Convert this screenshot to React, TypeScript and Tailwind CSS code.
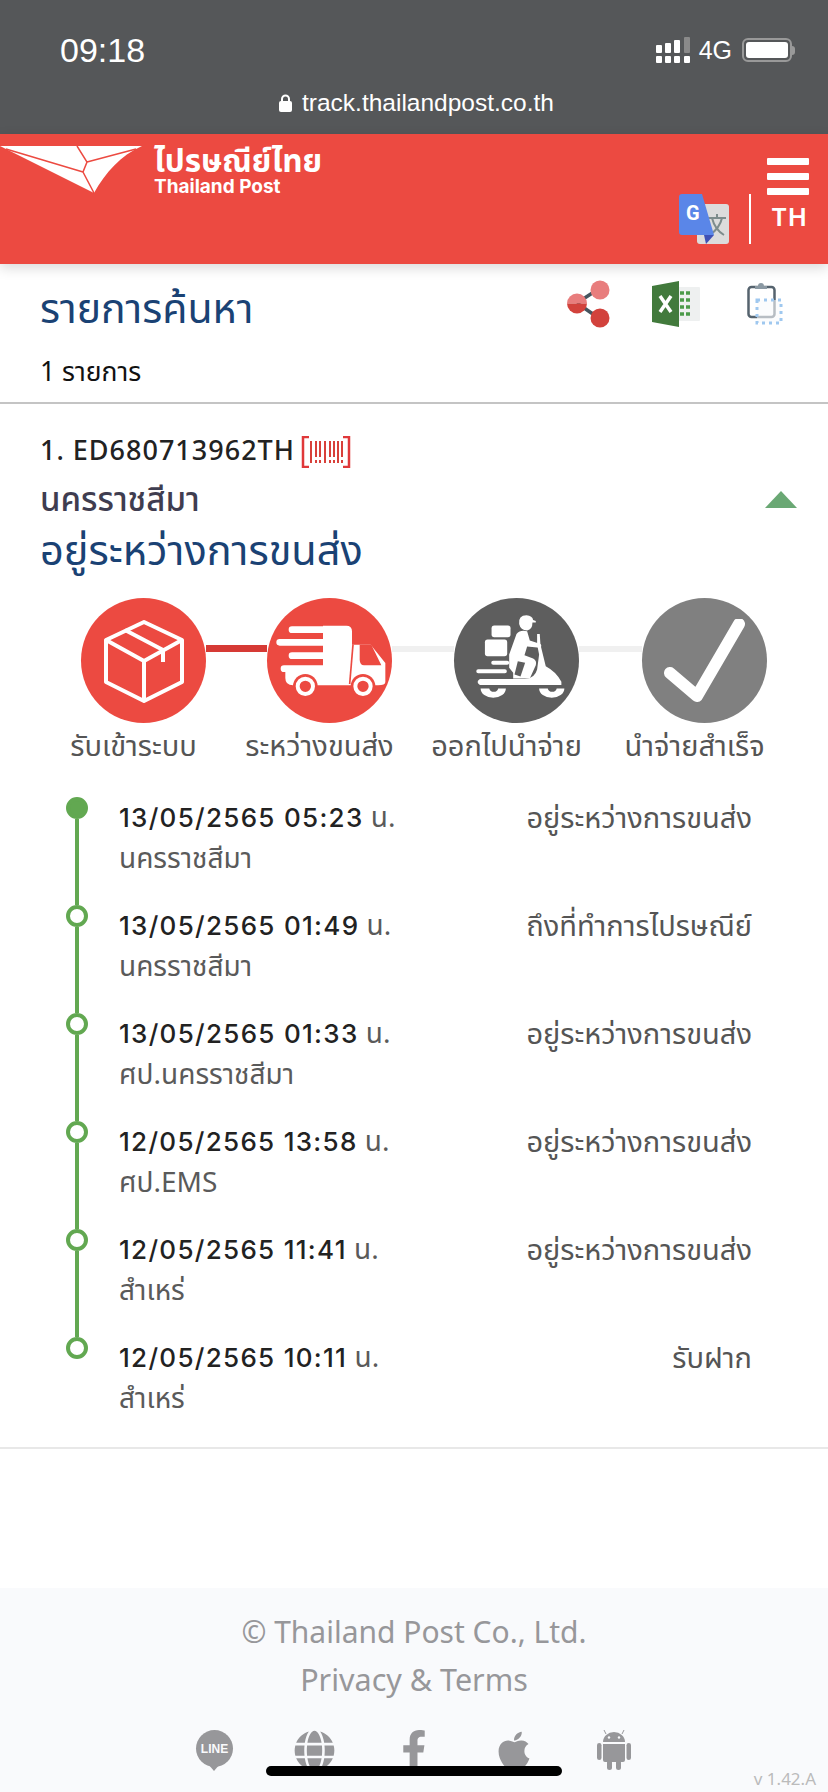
import React from 'react';
import { FaGlobe, FaFacebookF, FaApple } from 'react-icons/fa';

const TRACKS = [
  { date: '13/05/2565 05:23', place: 'นครราชสีมา', status: 'อยู่ระหว่างการขนส่ง' },
  { date: '13/05/2565 01:49', place: 'นครราชสีมา', status: 'ถึงที่ทำการไปรษณีย์' },
  { date: '13/05/2565 01:33', place: 'ศป.นครราชสีมา', status: 'อยู่ระหว่างการขนส่ง' },
  { date: '12/05/2565 13:58', place: 'ศป.EMS', status: 'อยู่ระหว่างการขนส่ง' },
  { date: '12/05/2565 11:41', place: 'สำเหร่', status: 'อยู่ระหว่างการขนส่ง' },
  { date: '12/05/2565 10:11', place: 'สำเหร่', status: 'รับฝาก' },
];

function Logo() {
  return (
    <svg width="142" height="48" viewBox="0 0 142 48">
      <path d="M0 0H142C120 10 106 26 94 47Z" fill="#fff" />
      <path d="M6 3L83 26M77 0L87 16L83 26L94 47M87 16L136 3" stroke="#ec4a41" strokeWidth="1.5" fill="none" />
    </svg>
  );
}

function TranslateIcon() {
  return (
    <svg width="50" height="50" viewBox="0 0 50 50">
      <rect x="18" y="10" width="32" height="40" rx="3" fill="#dcdcdc" />
      <path d="M29 24H47M38 20V24M43 24C41 33 35 38 31 41M33 24C35 32 40 38 45 41" stroke="#7d8c8c" strokeWidth="2" fill="none" />
      <path d="M25 41L35 41L27 50Z" fill="#3f51b5" />
      <path d="M3 0H23L35 41H3C1 41 0 40 0 38V3C0 1 1 0 3 0Z" fill="#5a86e8" />
      <text x="7" y="26" fill="#fff" fontSize="20" fontWeight="700" fontFamily="Roboto, sans-serif">G</text>
    </svg>
  );
}

function ShareIcon() {
  return (
    <svg width="43" height="48" viewBox="0 0 43 48">
      <path d="M10 23L33 8M10 23L33 39" stroke="#46555f" strokeWidth="3.5" />
      <circle cx="33" cy="10" r="9.5" fill="#e87d7d" />
      <circle cx="33" cy="38" r="9.5" fill="#d2423c" />
      <path d="M0 23.500a10 10 0 0 1 20 0Z" fill="#e87d7d" />
      <path d="M0 23.500a10 10 0 0 0 20 0Z" fill="#d2423c" />
    </svg>
  );
}

function ExcelIcon() {
  return (
    <svg width="48" height="46" viewBox="0 0 48 46">
      <rect x="24" y="6" width="24" height="34" rx="1" fill="#eef0f0" />
      <path d="M28 12h10M28 19h10M28 26h10M28 33h10" stroke="#4c9a4a" strokeWidth="3.500" strokeDasharray="4 2" />
      <path d="M0 5L27 0V46L0 41Z" fill="#427a3c" />
      <path d="M8 15L19 31M19 15L8 31" stroke="#fff" strokeWidth="3.500" />
    </svg>
  );
}

function ClipboardIcon() {
  return (
    <svg width="36" height="44" viewBox="0 0 36 44">
      <rect x="1.500" y="5" width="26" height="30" rx="3" fill="none" stroke="#55636e" strokeWidth="2.500" />
      <path d="M8 7V4H11A3 3 0 0 1 17 4H20V7Z" fill="#8b99a3" />
      <rect x="10" y="18" width="24" height="23" fill="#f8fafc" fillOpacity="0.6" stroke="#9fc8ef" strokeWidth="3" strokeDasharray="3 4" />
    </svg>
  );
}

function BarcodeIcon() {
  return (
    <svg width="50" height="32" viewBox="0 0 50 32" className="mt-[3px]">
      <path d="M8 1H2V31H8M42 1H48V31H42" stroke="#e0383a" strokeWidth="2.500" fill="none" />
      <path d="M10 5V27M15 5V21M19 5V21M24 5V27M29 5V21M33 5V21M37 5V27M41 5V21" stroke="#d8403a" strokeWidth="2" />
      <path d="M15 24V27M19 24V27M29 24V27M33 24V27M41 24V27" stroke="#d8403a" strokeWidth="2" />
    </svg>
  );
}

function BoxIcon() {
  return (
    <svg width="82" height="88" viewBox="0 0 82 84" fill="none" stroke="#fff" strokeWidth="4" strokeLinejoin="round">
      <path d="M41 3L79 21V63L41 82L3 63V21Z" />
      <path d="M3 21L41 42L79 21M41 42V82M22 11L60 31V43" />
    </svg>
  );
}

function TruckIcon() {
  return (
    <svg width="125" height="125" viewBox="17 10 375 375">
      <path d="M185 93H255Q272 93 272 110V150H328L372 205V262Q372 272 350 272H95Q72 272 72 250V222H185Z" fill="#fff" />
      <path d="M92 105H190M55 143H190M92 183H190M68 222H190" stroke="#fff" strokeWidth="20" strokeLinecap="round" />
      <path d="M295 150H330L360 212H308Q296 212 295 195Z" fill="#ec4a41" />
      <path d="M275 150L265 268" stroke="#ec4a41" strokeWidth="5" />
      <circle cx="132" cy="275" r="37" fill="#ec4a41" />
      <circle cx="132" cy="275" r="23" fill="#ec4a41" stroke="#fff" strokeWidth="12" />
      <circle cx="305" cy="275" r="37" fill="#ec4a41" />
      <circle cx="305" cy="275" r="23" fill="#ec4a41" stroke="#fff" strokeWidth="12" />
    </svg>
  );
}

function ScooterIcon() {
  return (
    <svg width="125" height="125" viewBox="12 10 376 376" fill="#fff">
      <rect x="125" y="93" width="57" height="35" rx="8" />
      <rect x="105" y="135" width="67" height="50" rx="8" />
      <path d="M208 88Q205 62 230 62Q248 64 250 76L258 79V84L248 84Q248 105 232 108Q212 106 208 88Z" />
      <path d="M200 118Q212 104 232 110L240 138L272 148Q278 155 270 160L232 156L224 182L250 192Q262 198 258 212L240 252H190L190 235L178 220L178 180Z" />
      <path d="M204 200L226 205L212 246L194 240Z" fill="#5e5e5e" />
      <path d="M262 118L270 118L272 150L288 215Q320 232 335 262L335 272H90Q76 263 90 254H225Q255 252 262 225L268 180L262 150Z" />
      <path d="M130 205H172M85 230H165" stroke="#fff" strokeWidth="12" strokeLinecap="round" />
      <path d="M92 282H118A14 14 0 0 0 145 282H168A38 28 0 0 1 92 282Z" />
      <path d="M268 282H294A14 14 0 0 0 321 282H344A38 28 0 0 1 268 282Z" />
    </svg>
  );
}

function CheckIcon() {
  return (
    <svg width="82" height="84" viewBox="0 0 82 84" fill="none" stroke="#fff" strokeWidth="12" strokeLinecap="round" strokeLinejoin="round">
      <path d="M6 54L33 77L75 5" />
    </svg>
  );
}

function LineIcon() {
  return (
    <svg width="41" height="41" viewBox="0 0 41 41" fill="#97979a">
      <circle cx="20.500" cy="18.500" r="18.500" />
      <path d="M14 34H26L20 41Z" />
      <text x="20.500" y="23" textAnchor="middle" fill="#f9fafc" fontSize="12" fontWeight="700" fontFamily="'Liberation Sans', sans-serif">LINE</text>
    </svg>
  );
}

function AndroidIcon() {
  return (
    <svg width="34" height="40" viewBox="0 0 34 40" fill="#97979a">
      <path d="M6 12A11 10 0 0 1 28 12Z" />
      <path d="M9 4L7 0M25 4L27 0" stroke="#97979a" strokeWidth="1" />
      <circle cx="12" cy="7.500" r="1.200" fill="#f9fafc" />
      <circle cx="22" cy="7.500" r="1.200" fill="#f9fafc" />
      <path d="M6 14H28V30Q28 32 26 32H8Q6 32 6 30Z" />
      <rect x="0" y="13" width="4.500" height="17" rx="2.250" />
      <rect x="29.500" y="13" width="4.500" height="17" rx="2.250" />
      <rect x="10" y="30" width="5" height="10" rx="2.500" />
      <rect x="19" y="30" width="5" height="10" rx="2.500" />
    </svg>
  );
}

function Step({ label, color, children }: { label: string; color: string; children: React.ReactNode }) {
  return (
    <div className="flex flex-col items-center w-[125px] shrink-0 relative z-10">
      <div className={`w-[125px] h-[125px] rounded-full flex items-center justify-center ${color}`}>{children}</div>
      <div className="mt-[6px] -translate-x-[10px] text-[29px] leading-[32px] text-[#555] whitespace-nowrap">{label}</div>
    </div>
  );
}

export default function App() {
  return (
    <div className="relative w-[828px] h-[1792px] overflow-hidden bg-white font-['Noto_Sans','Noto_Sans_Thai',sans-serif]">
      {/* Status bar */}
      <div className="h-[134px] bg-[#555759] text-white flex flex-col">
        <div className="flex items-center justify-between pl-[60px] pr-[33px] pt-[32px]">
          <span className="text-[34px] leading-[36px] font-['Liberation_Sans',sans-serif]">09:18</span>
          <div className="flex items-center gap-[6px]">
            <svg width="34" height="26" viewBox="0 0 34 26" fill="#fff">
              <rect x="0" y="8" width="6" height="8" rx="1" />
              <rect x="9" y="6" width="6" height="10" rx="1" />
              <rect x="18" y="3" width="6" height="13" rx="1" />
              <rect x="28" y="0" width="6" height="16" rx="1" fill="#8a8a8a" />
              <rect x="0" y="19" width="6" height="7" rx="1" />
              <rect x="9" y="19" width="6" height="7" rx="1" />
              <rect x="18" y="19" width="6" height="7" rx="1" />
              <rect x="28" y="19" width="6" height="7" rx="1" />
            </svg>
            <span className="text-[25px] leading-[28px] ml-[3px] font-['Liberation_Sans',sans-serif]">4G</span>
            <div className="flex items-center ml-[4px]">
              <div className="w-[50px] h-[24px] rounded-[6px] border-2 border-[#999] p-[2px]">
                <div className="w-full h-full rounded-[3px] bg-white" />
              </div>
              <div className="w-[3px] h-[9px] rounded-r-sm bg-[#999]" />
            </div>
          </div>
        </div>
        <div className="flex items-center justify-center gap-[10px] mt-[21px] pl-[5px] text-[24.500px] leading-[28px] font-['Liberation_Sans',sans-serif]">
          <svg width="13" height="18" viewBox="0 0 13 18" fill="#fff">
            <path d="M2 8V5a4.500 4.500 0 0 1 9 0v3h-2V5a2.500 2.500 0 0 0-5 0v3Z" />
            <rect x="0" y="7" width="13" height="11" rx="2" />
          </svg>
          <span>track.thailandpost.co.th</span>
        </div>
      </div>

      {/* Header */}
      <header className="relative z-20 h-[130px] bg-[#ec4a41] flex justify-between shadow-[0_4px_12px_rgba(0,0,0,0.15)]">
        <div className="flex items-start pt-[12px] gap-[12px]">
          <Logo />
          <div className="text-white font-bold -mt-[3px]">
            <div className="text-[31.500px] leading-[34px]">ไปรษณีย์ไทย</div>
            <div className="text-[19px] leading-[20px] font-['Inter',sans-serif]">Thailand Post</div>
          </div>
        </div>
        <div className="flex items-end pb-[20px] pr-[19px]">
          <TranslateIcon />
          <div className="w-[2px] h-[50px] bg-white ml-[20px] mr-[16px]" />
          <div className="flex flex-col items-center w-[42px] h-[86px] gap-[8px]">
            <div className="w-[42px] h-[7px] rounded-[1px] bg-white shrink-0" />
            <div className="w-[42px] h-[7px] rounded-[1px] bg-white shrink-0" />
            <div className="w-[42px] h-[7px] rounded-[1px] bg-white shrink-0" />
            <span className="text-[26px] leading-[30px] font-semibold text-white tracking-[1px] -mt-[2px] translate-x-[2px]">TH</span>
          </div>
        </div>
      </header>

      {/* Search result title */}
      <div className="h-[140px] border-b-2 border-[#c4c4c4] px-[40px] relative">
        <div className="flex items-start justify-between pt-[14px]">
          <h1 className="text-[41px] leading-[52px] mt-[3px] text-[#1a4274]">รายการค้นหา</h1>
          <div className="flex items-center h-[52px] pr-[5px]">
            <ShareIcon />
            <div className="ml-[42px]"><ExcelIcon /></div>
            <div className="ml-[47px]"><ClipboardIcon /></div>
          </div>
        </div>
        <div className="text-[26.500px] leading-[36px] text-[#111] mt-[20px]">1 รายการ</div>
      </div>

      {/* Parcel */}
      <div className="px-[40px] pt-[28px] relative">
        <div className="flex items-center gap-[6px] h-[36px]">
          <span className="text-[27px] leading-[36px] font-medium tracking-[1px] text-[#222]">1. ED680713962TH</span>
          <BarcodeIcon />
        </div>
        <div className="flex items-center justify-between mt-[13px] h-[36px]">
          <span className="text-[33px] leading-[36px] font-medium text-[#3f3d50]">นครราชสีมา</span>
          <div className="w-0 h-0 border-x-[16px] border-x-transparent border-b-[17px] border-b-[#6aa874] -mr-[9px]" />
        </div>
        <div className="text-[41.500px] leading-[50px] text-[#1a4274] mt-[7px]">อยู่ระหว่างการขนส่ง</div>
      </div>

      {/* Steps */}
      <div className="mt-[24px] ml-[81px] w-[687px] flex relative">
        <Step label="รับเข้าระบบ" color="bg-[#ec4a41]"><BoxIcon /></Step>
        <div className="w-[61px] h-[7px] mt-[47px] bg-[#d63a35]" />
        <Step label="ระหว่างขนส่ง" color="bg-[#ec4a41]"><TruckIcon /></Step>
        <div className="w-[62px] h-[6px] mt-[48px] bg-[#f0f0f0]" />
        <Step label="ออกไปนำจ่าย" color="bg-[#5e5e5e]"><ScooterIcon /></Step>
        <div className="w-[63px] h-[6px] mt-[48px] bg-[#f0f0f0]" />
        <Step label="นำจ่ายสำเร็จ" color="bg-[#808080]"><CheckIcon /></Step>
      </div>

      {/* Timeline */}
      <div className="mt-[36px] pl-[66px] pr-[76px] border-b-2 border-[#e8e8e8] h-[652px]">
        {TRACKS.map((t, i) => (
          <div key={t.date} className="flex h-[108px]">
            <div className="w-[22px] flex flex-col items-center shrink-0">
              <div className={`w-[22px] h-[22px] shrink-0 rounded-full border-[4px] border-[#62a851] ${i === 0 ? 'bg-[#62a851]' : 'bg-white'}`} />
              {i < TRACKS.length - 1 && <div className="w-[4px] flex-1 bg-[#62a851]" />}
            </div>
            <div className="ml-[31px] flex-1 flex justify-between">
              <div>
                <div className="text-[28px] leading-[39px] text-[#5a5a5a]">
                  <span className="font-['Inter',sans-serif] text-[26px] font-medium text-[#222] tracking-[1.300px]">{t.date}</span> น.
                </div>
                <div className="text-[28px] leading-[40px] text-[#5a5a5a]">{t.place}</div>
              </div>
              <div className="text-[29px] leading-[40px] text-[#555]">{t.status}</div>
            </div>
          </div>
        ))}
      </div>

      {/* Footer */}
      <footer className="absolute left-0 right-0 bottom-0 h-[204px] bg-[#f9fafc] flex flex-col items-center text-[#97979a]">
        <div className="text-[30px] leading-[40px] mt-[24px]">© Thailand Post Co., Ltd.</div>
        <div className="text-[30.500px] leading-[40px] mt-[7px]">Privacy &amp; Terms</div>
        <div className="flex items-center mt-[30px]">
          <div className="w-[100px] flex justify-center"><LineIcon /></div>
          <div className="w-[100px] flex justify-center"><FaGlobe size={41} /></div>
          <div className="w-[100px] flex justify-center"><FaFacebookF size={40} /></div>
          <div className="w-[100px] flex justify-center"><FaApple size={42} /></div>
          <div className="w-[100px] flex justify-center"><AndroidIcon /></div>
        </div>
        <div className="absolute right-[12px] bottom-[3px] text-[17px] leading-[20px] text-[#bbb]">v 1.42.A</div>
      </footer>

      {/* Home indicator */}
      <div className="absolute left-[266px] top-[1766px] w-[296px] h-[10px] rounded-full bg-black z-30" />
    </div>
  );
}
